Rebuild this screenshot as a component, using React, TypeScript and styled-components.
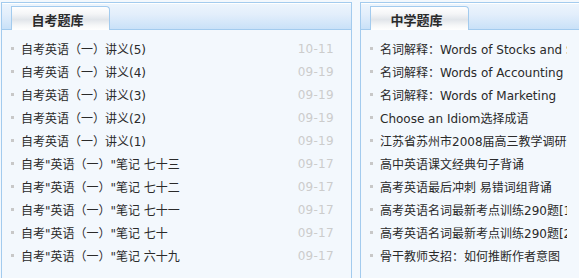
import React from 'react'
import styled, { createGlobalStyle } from 'styled-components'

const GlobalStyle = createGlobalStyle`
  html, body {
    margin: 0;
    padding: 0;
    background: #f3f8fd;
    overflow: hidden;
  }
`

const Page = styled.div`
  display: flex;
  gap: 8px;
  padding: 2px 0 0 1px;
  width: 579px;
  height: 278px;
  box-sizing: border-box;
  overflow: hidden;
  font-family: "DejaVu Sans", "Noto Sans CJK SC", sans-serif;
`

const Panel = styled.div<{ $width: number }>`
  flex: 0 0 ${p => p.$width}px;
  width: ${p => p.$width}px;
  box-sizing: border-box;
  border: 1px solid #a3cbee;
  border-bottom: none;
  background: #f3f8fd;
  height: 300px;
`

const Header = styled.div`
  height: 27px;
  box-sizing: border-box;
  border-bottom: 1px solid #a3cbee;
  background: linear-gradient(#edf5fd 0%, #e2eefb 45%, #c9e1f8 100%);
  box-shadow: inset 0 1px 0 #ffffff;
  padding-left: 9px;
  display: flex;
  align-items: flex-end;
`

const Tab = styled.div`
  width: 99px;
  height: 24px;
  margin-bottom: -1px;
  box-sizing: border-box;
  border: 1px solid #a3cbee;
  border-bottom: none;
  border-radius: 0 4px 0 0;
  background: linear-gradient(#ffffff 0%, #f4f5f7 30%, #e1e5ea 55%, #f6f7f8 80%, #ffffff 100%);
  font-family: "Noto Sans CJK SC", sans-serif;
  font-weight: bold;
  font-size: 13px;
  color: #2a2a2a;
  display: flex;
  align-items: center;
  justify-content: center;
  padding-right: 6px;
  padding-top: 1px;
`

const List = styled.ul`
  list-style: none;
  margin: 0;
  padding: 7px 17px 0 9px;
`

const Row = styled.li`
  display: flex;
  align-items: center;
  height: 23px;
  font-size: 12px;
  color: #2a2a2a;
  white-space: nowrap;
  &::before {
    content: '';
    flex: 0 0 3px;
    width: 3px;
    height: 3px;
    background: #c8c8c8;
    margin-right: 7px;
  }
`

const Title = styled.span<{ $clip?: number }>`
  flex: ${p => (p.$clip ? `0 0 ${p.$clip}px` : '1')};
  overflow: hidden;
`

const Date = styled.span`
  color: #cccccc;
  font-size: 12px;
  margin-left: 8px;
  letter-spacing: 0.3px;
`

const leftItems = [
  ['自考英语（一）讲义(5)', '10-11'],
  ['自考英语（一）讲义(4)', '09-19'],
  ['自考英语（一）讲义(3)', '09-19'],
  ['自考英语（一）讲义(2)', '09-19'],
  ['自考英语（一）讲义(1)', '09-19'],
  ['自考"英语（一）"笔记 七十三', '09-17'],
  ['自考"英语（一）"笔记 七十二', '09-17'],
  ['自考"英语（一）"笔记 七十一', '09-17'],
  ['自考"英语（一）"笔记 七十', '09-17'],
  ['自考"英语（一）"笔记 六十九', '09-17'],
]

const rightItems = [
  '名词解释：Words of Stocks and Shares',
  '名词解释：Words of Accounting',
  '名词解释：Words of Marketing',
  'Choose an Idiom选择成语',
  '江苏省苏州市2008届高三教学调研测试',
  '高中英语课文经典句子背诵',
  '高考英语最后冲刺 易错词组背诵',
  '高考英语名词最新考点训练290题[1]',
  '高考英语名词最新考点训练290题[2]',
  '骨干教师支招：如何推断作者意图',
]

export default function App() {
  return (
    <>
      <GlobalStyle />
      <Page>
        <Panel $width={351}>
          <Header>
            <Tab>自考题库</Tab>
          </Header>
          <List>
            {leftItems.map(([t, d], i) => (
              <Row key={i}>
                <Title>{t}</Title>
                <Date>{d}</Date>
              </Row>
            ))}
          </List>
        </Panel>
        <Panel $width={351}>
          <Header>
            <Tab>中学题库</Tab>
          </Header>
          <List>
            {rightItems.map((t, i) => (
              <Row key={i}>
                <Title $clip={187}>{t}</Title>
              </Row>
            ))}
          </List>
        </Panel>
      </Page>
    </>
  )
}
